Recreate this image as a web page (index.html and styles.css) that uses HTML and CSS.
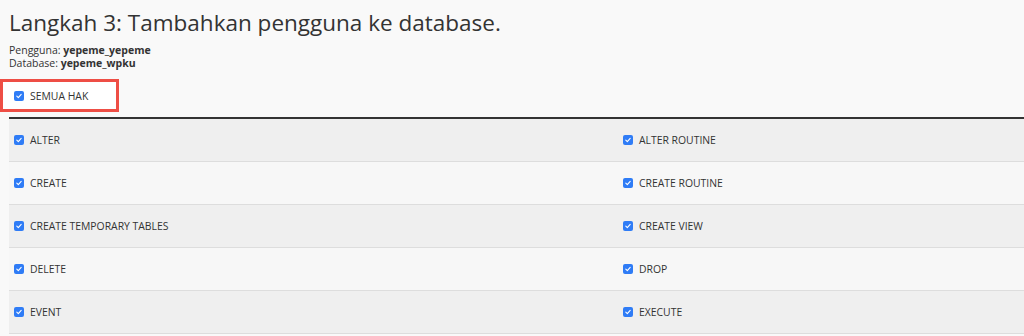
FILE: index.html
```html
<!DOCTYPE html>
<html lang="id">
<head>
	<meta charset="UTF-8">
	<title>Langkah 3</title>
	<link rel="stylesheet" href="styles.css">
</head>
<body>
	<h1 class="title">Langkah 3: Tambahkan pengguna ke database.</h1>
	<p class="info">Pengguna: <b>yepeme_yepeme</b><br>Database: <b>yepeme_wpku</b></p>

	<div class="all-box">
		<label class="check"><span class="box"><svg viewBox="0 0 10 10"><path d="M2.8 5.2 L4.3 6.7 L7.2 3.4" fill="none" stroke="#fff" stroke-width="1.1" stroke-linecap="round" stroke-linejoin="round"/></svg></span>SEMUA HAK</label>
	</div>

	<table class="privs">
		<tr class="odd">
			<td><label class="check"><span class="box"><svg viewBox="0 0 10 10"><path d="M2.8 5.2 L4.3 6.7 L7.2 3.4" fill="none" stroke="#fff" stroke-width="1.1" stroke-linecap="round" stroke-linejoin="round"/></svg></span>ALTER</label></td>
			<td><label class="check"><span class="box"><svg viewBox="0 0 10 10"><path d="M2.8 5.2 L4.3 6.7 L7.2 3.4" fill="none" stroke="#fff" stroke-width="1.1" stroke-linecap="round" stroke-linejoin="round"/></svg></span>ALTER ROUTINE</label></td>
		</tr>
		<tr>
			<td><label class="check"><span class="box"><svg viewBox="0 0 10 10"><path d="M2.8 5.2 L4.3 6.7 L7.2 3.4" fill="none" stroke="#fff" stroke-width="1.1" stroke-linecap="round" stroke-linejoin="round"/></svg></span>CREATE</label></td>
			<td><label class="check"><span class="box"><svg viewBox="0 0 10 10"><path d="M2.8 5.2 L4.3 6.7 L7.2 3.4" fill="none" stroke="#fff" stroke-width="1.1" stroke-linecap="round" stroke-linejoin="round"/></svg></span>CREATE ROUTINE</label></td>
		</tr>
		<tr class="odd">
			<td><label class="check"><span class="box"><svg viewBox="0 0 10 10"><path d="M2.8 5.2 L4.3 6.7 L7.2 3.4" fill="none" stroke="#fff" stroke-width="1.1" stroke-linecap="round" stroke-linejoin="round"/></svg></span>CREATE TEMPORARY TABLES</label></td>
			<td><label class="check"><span class="box"><svg viewBox="0 0 10 10"><path d="M2.8 5.2 L4.3 6.7 L7.2 3.4" fill="none" stroke="#fff" stroke-width="1.1" stroke-linecap="round" stroke-linejoin="round"/></svg></span>CREATE VIEW</label></td>
		</tr>
		<tr>
			<td><label class="check"><span class="box"><svg viewBox="0 0 10 10"><path d="M2.8 5.2 L4.3 6.7 L7.2 3.4" fill="none" stroke="#fff" stroke-width="1.1" stroke-linecap="round" stroke-linejoin="round"/></svg></span>DELETE</label></td>
			<td><label class="check"><span class="box"><svg viewBox="0 0 10 10"><path d="M2.8 5.2 L4.3 6.7 L7.2 3.4" fill="none" stroke="#fff" stroke-width="1.1" stroke-linecap="round" stroke-linejoin="round"/></svg></span>DROP</label></td>
		</tr>
		<tr class="odd">
			<td><label class="check"><span class="box"><svg viewBox="0 0 10 10"><path d="M2.8 5.2 L4.3 6.7 L7.2 3.4" fill="none" stroke="#fff" stroke-width="1.1" stroke-linecap="round" stroke-linejoin="round"/></svg></span>EVENT</label></td>
			<td><label class="check"><span class="box"><svg viewBox="0 0 10 10"><path d="M2.8 5.2 L4.3 6.7 L7.2 3.4" fill="none" stroke="#fff" stroke-width="1.1" stroke-linecap="round" stroke-linejoin="round"/></svg></span>EXECUTE</label></td>
		</tr>
	</table>
</body>
</html>
```
FILE: styles.css
```css
body{
	margin: 0;
	background-color: #f9f9f9;
	font-family: "Open Sans", sans-serif;
	color: #333;
	overflow: hidden;
}

.title{
	margin: 0;
	padding: 7px 0 0 9px;
	font-size: 22.5px;
	font-weight: 400;
	line-height: 32px;
	color: #333;
}

.info{
	margin: 5px 0 0 9px;
	font-size: 10.5px;
	line-height: 13px;
}

.info b{
	font-weight: 700;
}

.all-box{
	height: 27px;
	margin-top: 9px;
	border: 3px solid #ee4e45;
	background-color: #fff;
	display: flex;
	align-items: center;
	padding-left: 11px;
	box-sizing: content-box;
	width: 102px;
}

.check{
	display: flex;
	align-items: center;
	font-size: 10.4px;
	color: #333;
}

.box{
	width: 10px;
	height: 10px;
	border-radius: 2px;
	background-color: #2f7cf6;
	margin-right: 6px;
	display: inline-block;
}

.box svg{
	display: block;
	width: 10px;
	height: 10px;
}

.privs{
	margin: 5px 0 0 9px;
	width: 1218px;
	border-collapse: collapse;
	border-top: 2px solid #333;
}

.privs td{
	width: 50%;
	height: 41px;
	padding: 0 0 1px 5px;
	border-bottom: 1px solid #ddd;
	background-color: #f7f7f7;
}

.privs tr.odd td{
	background-color: #efefef;
}
```
